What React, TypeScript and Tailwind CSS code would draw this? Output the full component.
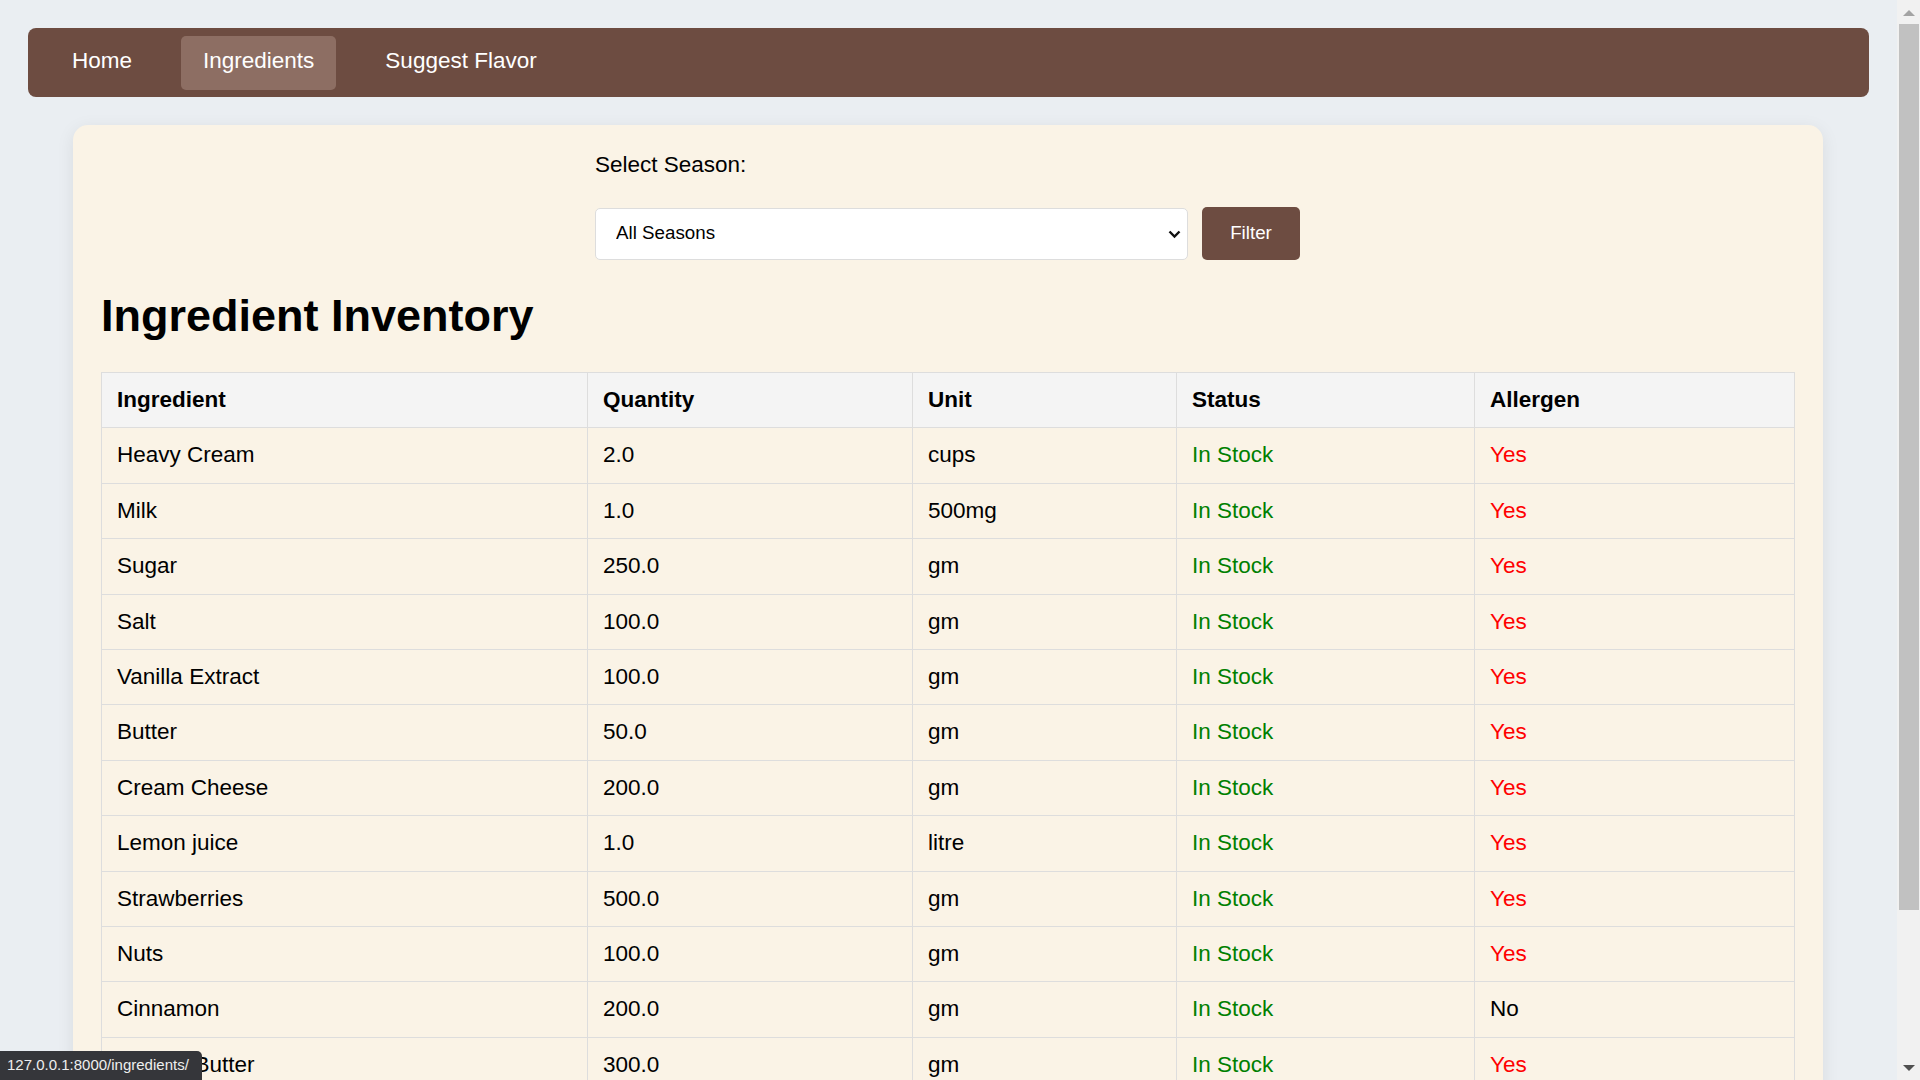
import React, { useState } from "react";

type Ingredient = {
  name: string;
  quantity: string;
  unit: string;
  status: string;
  allergen: boolean;
};

const ingredients: Ingredient[] = [
  { name: "Heavy Cream", quantity: "2.0", unit: "cups", status: "In Stock", allergen: true },
  { name: "Milk", quantity: "1.0", unit: "500mg", status: "In Stock", allergen: true },
  { name: "Sugar", quantity: "250.0", unit: "gm", status: "In Stock", allergen: true },
  { name: "Salt", quantity: "100.0", unit: "gm", status: "In Stock", allergen: true },
  { name: "Vanilla Extract", quantity: "100.0", unit: "gm", status: "In Stock", allergen: true },
  { name: "Butter", quantity: "50.0", unit: "gm", status: "In Stock", allergen: true },
  { name: "Cream Cheese", quantity: "200.0", unit: "gm", status: "In Stock", allergen: true },
  { name: "Lemon juice", quantity: "1.0", unit: "litre", status: "In Stock", allergen: true },
  { name: "Strawberries", quantity: "500.0", unit: "gm", status: "In Stock", allergen: true },
  { name: "Nuts", quantity: "100.0", unit: "gm", status: "In Stock", allergen: true },
  { name: "Cinnamon", quantity: "200.0", unit: "gm", status: "In Stock", allergen: false },
  { name: "Peanut Butter", quantity: "300.0", unit: "gm", status: "In Stock", allergen: true },
];

const navLinks = ["Home", "Ingredients", "Suggest Flavor"];

const cell = "border border-[#dddddd] px-[15px] py-[14px]";

const App = () => {
  const [season, setSeason] = useState<string>("all");

  return (
    <div className="h-screen overflow-y-scroll bg-[#eaeef2] font-['Liberation_Sans',Arial,sans-serif] text-black">
      <div className="pt-[28px] pb-[90px]">
        <nav className="ml-[28px] w-[1841px] h-[69px] bg-[#6d4c41] rounded-[8px] flex items-center pl-[22px] gap-[27px]">
          {navLinks.map((link) => (
            <a
              key={link}
              href="#"
              className={
                link === "Ingredients"
                  ? "px-[22px] pb-[3px] h-[54px] flex items-center rounded-[5px] bg-[#8d6e63] text-white text-[22.5px]"
                  : "px-[22px] pb-[3px] h-[54px] flex items-center rounded-[5px] text-white text-[22.5px]"
              }
            >
              {link}
            </a>
          ))}
        </nav>

        <main className="ml-[73px] mt-[28px] w-[1750px] bg-[#faf3e6] rounded-[15px] shadow-[0_4px_18px_rgba(0,0,0,0.08)] px-[28px] pt-[27px] pb-[28px]">
          <form className="w-[706px] mx-auto" onSubmit={(e) => e.preventDefault()}>
            <label htmlFor="season" className="block text-[22.5px] leading-[26px]">
              Select Season:
            </label>
            <div className="mt-[29px] flex items-center gap-[14px]">
              <div className="relative w-[593px]">
                <select
                  id="season"
                  value={season}
                  onChange={(e) => setSeason(e.target.value)}
                  className="appearance-none w-full h-[52px] bg-white border border-[#dddddd] rounded-[5px] pl-[20px] text-[18.75px] outline-none"
                >
                  <option value="all">All Seasons</option>
                  <option value="spring">Spring</option>
                  <option value="summer">Summer</option>
                  <option value="autumn">Autumn</option>
                  <option value="winter">Winter</option>
                </select>
                <svg
                  className="absolute right-[7px] top-[22px] pointer-events-none"
                  width="13"
                  height="9"
                  viewBox="0 0 13 9"
                  fill="none"
                >
                  <polyline points="1.5,1.5 6.5,6.5 11.5,1.5" stroke="#111" strokeWidth="2.4" />
                </svg>
              </div>
              <button
                type="submit"
                className="w-[98px] h-[53px] bg-[#6d4c41] text-white text-[18.75px] rounded-[5px]"
              >
                Filter
              </button>
            </div>
          </form>

          <h1 className="mt-[30px] text-[45px] leading-[52px] font-bold">Ingredient Inventory</h1>

          <table className="mt-[30px] w-[1694px] border-collapse text-[22.5px] leading-[26.4px]">
            <thead>
              <tr className="bg-[#f4f4f4]">
                <th className={`w-[486px] ${cell} text-left font-bold`}>Ingredient</th>
                <th className={`w-[325px] ${cell} text-left font-bold`}>Quantity</th>
                <th className={`w-[264px] ${cell} text-left font-bold`}>Unit</th>
                <th className={`w-[298px] ${cell} text-left font-bold`}>Status</th>
                <th className={`${cell} text-left font-bold`}>Allergen</th>
              </tr>
            </thead>
            <tbody>
              {ingredients.map((item) => (
                <tr key={item.name}>
                  <td className={cell}>{item.name}</td>
                  <td className={cell}>{item.quantity}</td>
                  <td className={cell}>{item.unit}</td>
                  <td className={`${cell} text-[#008000]`}>{item.status}</td>
                  <td className={item.allergen ? `${cell} text-[#ff0000]` : `${cell} text-black`}>
                    {item.allergen ? "Yes" : "No"}
                  </td>
                </tr>
              ))}
            </tbody>
          </table>
        </main>
      </div>

      {/* browser scrollbar as seen in the capture */}
      <div className="fixed right-0 top-0 h-screen w-[23px] bg-[#f1f1f1]">
        <div className="absolute left-[6px] top-[10px] w-0 h-0 border-l-[6px] border-r-[6px] border-b-[6px] border-l-transparent border-r-transparent border-b-[#a3a3a3]" />
        <div className="absolute right-[1px] top-[24px] w-[20px] h-[886px] bg-[#c1c1c1]" />
        <div className="absolute left-[6px] bottom-[9px] w-0 h-0 border-l-[6px] border-r-[6px] border-t-[6px] border-l-transparent border-r-transparent border-t-[#505050]" />
      </div>

      <div className="fixed left-0 bottom-0 h-[29px] w-[202px] bg-[#35363a] rounded-tr-[5px] flex items-center pl-[7px] text-[15px] text-[#eeeeee] whitespace-nowrap">
        127.0.0.1:8000/ingredients/
      </div>
    </div>
  );
};

export default App;
